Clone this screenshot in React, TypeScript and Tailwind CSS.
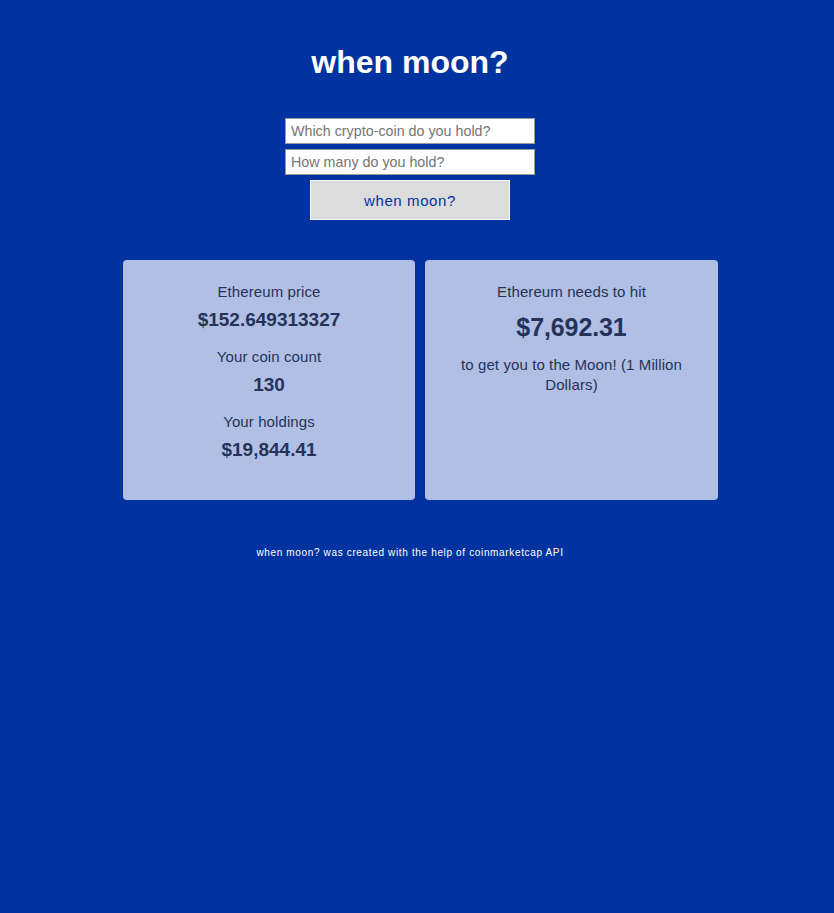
import React from "react";

export default function App() {
  return (
    <div
      className="min-h-[913px] w-full bg-[#0033a0] text-white"
      style={{ fontFamily: '"Liberation Sans", Arial, sans-serif' }}
    >
      <div className="flex flex-col items-center pt-[44px] pr-[14px]">
        <h1 className="text-[32px] leading-[36px] font-bold">when moon?</h1>
        <div className="mt-[38px] flex flex-col items-center">
          <input
            className="w-[250px] h-[26px] bg-white border border-[#999] px-[5px] text-[14.3px] text-black placeholder:text-[#757575] outline-none"
            placeholder="Which crypto-coin do you hold?"
            style={{ fontFamily: '"Liberation Sans", Arial, sans-serif' }}
          />
          <input
            className="mt-[5px] w-[250px] h-[26px] bg-white border border-[#999] px-[5px] text-[14.3px] text-black placeholder:text-[#757575] outline-none"
            placeholder="How many do you hold?"
            style={{ fontFamily: '"Liberation Sans", Arial, sans-serif' }}
          />
          <button
            className="mt-[5px] w-[200px] h-[40px] pt-[2px] bg-[#dcdcdc] border border-white text-[#0033a0] text-[15px] tracking-[0.6px]"
            style={{ fontFamily: '"Liberation Sans", Arial, sans-serif' }}
          >
            when moon?
          </button>
        </div>
      </div>
      <div className="mt-[40px] ml-[123px] flex gap-[10px]">
        <div className="w-[292px] h-[240px] rounded-[4px] bg-[#b0bfe3] text-[#25335a] flex flex-col items-center pt-[22px]">
          <div className="text-[15px] leading-[20px] tracking-[0.1px]">Ethereum price</div>
          <div className="mt-[8px] text-[19px] leading-[20px] font-bold">$152.649313327</div>
          <div className="mt-[17px] text-[15px] leading-[20px] tracking-[0.1px]">Your coin count</div>
          <div className="mt-[8px] text-[19px] leading-[20px] font-bold">130</div>
          <div className="mt-[17px] text-[15px] leading-[20px] tracking-[0.1px]">Your holdings</div>
          <div className="mt-[8px] text-[19px] leading-[20px] font-bold">$19,844.41</div>
        </div>
        <div className="w-[293px] h-[240px] rounded-[4px] bg-[#b0bfe3] text-[#25335a] flex flex-col items-center pt-[22px] px-[20px] text-center">
          <div className="text-[15px] leading-[20px] tracking-[0.1px]">Ethereum needs to hit</div>
          <div className="mt-[10px] text-[25px] leading-[30px] font-bold tracking-[-0.1px]">$7,692.31</div>
          <div className="mt-[13px] text-[15px] leading-[20px] tracking-[0.1px]">to get you to the Moon! (1 Million Dollars)</div>
        </div>
      </div>
      <div className="mt-[47px] text-center text-[10px] leading-[12px] tracking-[0.65px] pr-[14px]">
        when moon? was created with the help of coinmarketcap API
      </div>
    </div>
  );
}
